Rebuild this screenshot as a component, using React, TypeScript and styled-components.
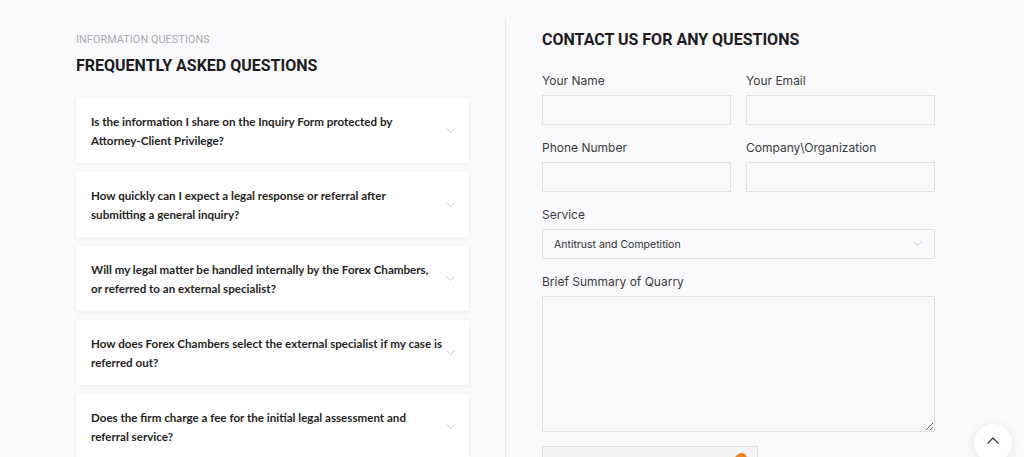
import React, { FC } from 'react';
import styled, { createGlobalStyle } from 'styled-components';

const GlobalStyle = createGlobalStyle`
  html, body {
    margin: 0;
    padding: 0;
    background: #fafafc;
  }
  * { box-sizing: border-box; }
`;

const Page = styled('div')`
  display: grid;
  grid-template-columns: 429px 430px;
  padding: 18px 0 0 76px;
  min-height: 457px;
  font-family: Roboto, 'Liberation Sans', sans-serif;
`;

const FaqColumn = styled('section')`
  padding: 14px 36px 0 0;
`;

const FormColumn = styled('section')`
  border-left: 1px solid #e8e8ea;
  padding: 12px 0 0 36px;
  min-width: 0;
`;

const Eyebrow = styled('div')`
  font-size: 10.8px;
  line-height: 16px;
  color: #a9a9ad;
  text-transform: uppercase;
  letter-spacing: 0.1px;
`;

const Heading = styled('h2')<{ $offset?: number }>`
  margin: ${({ $offset }) => $offset ?? 0}px 0 0 0;
  font-size: 16px;
  line-height: 20px;
  font-weight: 700;
  color: #1c1c1f;
  text-transform: uppercase;
`;

const FaqList = styled('div')`
  display: flex;
  flex-direction: column;
  gap: 9px;
  margin-top: 22px;
`;

const FaqCard = styled('div')`
  display: flex;
  align-items: center;
  justify-content: space-between;
  min-height: 65px;
  padding: 0 14px 0 15px;
  background: #ffffff;
  border-radius: 2px;
  box-shadow: 0 1px 5px rgba(20, 20, 40, 0.06);
`;

const Question = styled('div')`
  font-family: Lato, 'Open Sans', sans-serif;
  font-size: 11.6px;
  font-weight: 700;
  line-height: 19px;
  color: #1f1f23;
`;

const QuestionLine = styled('span')`
  display: block;
  white-space: nowrap;
`;

const Chevron: FC<{ size?: number }> = ({ size = 9 }) => (
  <svg width={size} height={size * 0.6} viewBox="0 0 10 6" fill="none">
    <path d="M1 1l4 4 4-4" stroke="#c4c4c8" strokeWidth="1" strokeLinecap="round" strokeLinejoin="round" />
  </svg>
);

const FieldGrid = styled('div')`
  display: grid;
  grid-template-columns: minmax(0, 1fr) minmax(0, 1fr);
  column-gap: 15px;
  row-gap: 15px;
  margin-top: 23px;
`;

const Field = styled('label')<{ $wide?: boolean }>`
  display: flex;
  flex-direction: column;
  gap: 6px;
  min-width: 0;
  grid-column: ${({ $wide }) => ($wide ? '1 / -1' : 'auto')};
`;

const Label = styled('span')`
  font-family: Inter, 'Liberation Sans', sans-serif;
  font-size: 12px;
  line-height: 16px;
  color: #3a3a3e;
`;

const Input = styled('input')`
  width: 100%;
  min-width: 0;
  height: 30px;
  border: 1px solid #e0e0e3;
  background: #fafafc;
  outline: none;
  padding: 0 10px;
`;

const SelectWrap = styled('div')`
  height: 30px;
  border: 1px solid #e0e0e3;
  display: flex;
  align-items: center;
  justify-content: space-between;
  padding: 0 12px 0 11px;
  font-family: Inter, 'Liberation Sans', sans-serif;
  font-size: 10.5px;
  color: #2e2e32;
`;

const TextArea = styled('textarea')`
  width: 100%;
  height: 136px;
  border: 1px solid #e0e0e3;
  background: #fafafc;
  outline: none;
  resize: vertical;
`;

const Turnstile = styled('div')`
  position: relative;
  width: 216px;
  height: 40px;
  margin-top: 14px;
  background: #f4f4f5;
  border: 1px solid #dfdfe1;
  border-bottom: none;
  overflow: hidden;
`;

const CloudMark = styled('svg')`
  position: absolute;
  right: 10px;
  top: 4px;
`;

const ScrollTop = styled('button')`
  position: fixed;
  right: 12px;
  bottom: -5px;
  width: 38px;
  height: 38px;
  border-radius: 50%;
  border: none;
  background: #ffffff;
  box-shadow: 0 1px 8px rgba(0, 0, 0, 0.1);
  display: flex;
  align-items: center;
  justify-content: center;
  padding: 0 0 6px 0;
`;

const questions: string[][] = [
  ['Is the information I share on the Inquiry Form protected by', 'Attorney-Client Privilege?'],
  ['How quickly can I expect a legal response or referral after', 'submitting a general inquiry?'],
  ['Will my legal matter be handled internally by the Forex Chambers,', 'or referred to an external specialist?'],
  ['How does Forex Chambers select the external specialist if my case is', 'referred out?'],
  ['Does the firm charge a fee for the initial legal assessment and', 'referral service?'],
];

const App: FC = () => {
  return (
    <>
      <GlobalStyle />
      <Page>
        <FaqColumn>
          <Eyebrow>Information Questions</Eyebrow>
          <Heading $offset={8}>Frequently Asked Questions</Heading>
          <FaqList>
            {questions.map((lines) => (
              <FaqCard key={lines[0]}>
                <Question>
                  {lines.map((line) => <QuestionLine key={line}>{line}</QuestionLine>)}
                </Question>
                <Chevron />
              </FaqCard>
            ))}
          </FaqList>
        </FaqColumn>
        <FormColumn>
          <Heading>Contact Us For Any Questions</Heading>
          <FieldGrid>
            <Field>
              <Label>Your Name</Label>
              <Input type="text" />
            </Field>
            <Field>
              <Label>Your Email</Label>
              <Input type="email" />
            </Field>
            <Field>
              <Label>Phone Number</Label>
              <Input type="tel" />
            </Field>
            <Field>
              <Label>Company\Organization</Label>
              <Input type="text" />
            </Field>
            <Field $wide>
              <Label>Service</Label>
              <SelectWrap>
                <span>Antitrust and Competition</span>
                <Chevron />
              </SelectWrap>
            </Field>
            <Field $wide>
              <Label>Brief Summary of Quarry</Label>
              <TextArea />
            </Field>
          </FieldGrid>
          <Turnstile>
            <CloudMark width="22" height="14" viewBox="0 0 22 14">
              <path d="M4 14c0-3 2-5 5-5 1-4 4-7 8-7 3 0 5 3 5 6v6z" fill="#f38020" />
            </CloudMark>
          </Turnstile>
        </FormColumn>
      </Page>
      <ScrollTop aria-label="Scroll to top">
        <svg width="12" height="7" viewBox="0 0 12 7" fill="none">
          <path d="M1 6l5-5 5 5" stroke="#333" strokeWidth="1.2" strokeLinecap="round" strokeLinejoin="round" />
        </svg>
      </ScrollTop>
    </>
  );
};

export default App;
